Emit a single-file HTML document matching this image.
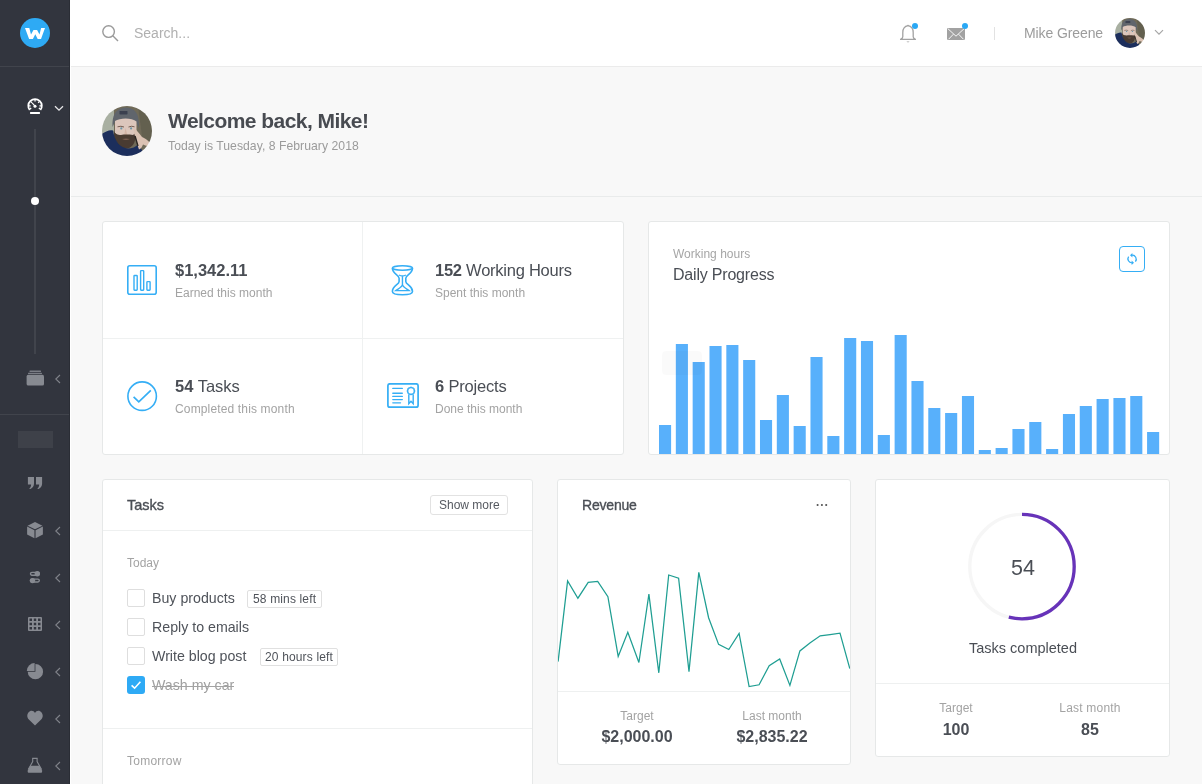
<!DOCTYPE html><html><head><meta charset="utf-8"><title>Dashboard</title><style>
*{margin:0;padding:0;box-sizing:border-box}
html,body{width:1202px;height:784px;overflow:hidden;background:#f8f8f8;font-family:"Liberation Sans",sans-serif}
.t{position:absolute;white-space:nowrap;will-change:transform}
.abs{position:absolute}
.card{position:absolute;background:#fff;border:1px solid #e6e8e8;border-radius:3px}
</style></head><body>
<div class="abs" style="left:0;top:0;width:70px;height:784px;background:#32353e;border-right:1px solid #2a2d35"></div>
<div class="abs" style="left:70px;top:0;width:1px;height:784px;background:#fff"></div>
<div class="abs" style="left:0;top:66px;width:69px;height:1px;background:#41444c"></div>
<div class="abs" style="left:0;top:414px;width:69px;height:1px;background:#41444c"></div>
<div class="abs" style="left:20px;top:18px;width:30px;height:30px;border-radius:50%;background:#2eaaf4"></div>
<svg class="abs" style="left:20px;top:18px" width="30" height="30" viewBox="0 0 30 30"><path d="M5 10.1 L9.3 10.1 L11 16.4 L13.5 11.9 L17.1 11.9 L19.5 16.4 L21.1 10.1 L25 10.1 L21 20.9 L17.7 20.9 L15.3 16.2 L12.9 20.9 L9.1 20.9 Z" fill="#fff"/></svg>
<svg class="abs" style="left:27px;top:98px" width="16" height="17" viewBox="0 0 16 17"><path d="M2.73 12.06 A6.75 6.75 0 1 1 13.37 12.06" fill="none" stroke="#fff" stroke-width="1.8"/><path d="M2.05 7.90 L3.65 7.90 M3.81 3.66 L4.94 4.79 M8.05 1.90 L8.05 3.50 M12.29 3.66 L11.16 4.79 M14.05 7.90 L12.45 7.90 M13.25 10.90 L11.86 10.10 M2.85 10.90 L4.24 10.10" stroke="#fff" stroke-width="1.3"/><line x1="5.1" y1="4.9" x2="8" y2="8.2" stroke="#fff" stroke-width="1.1"/><circle cx="8" cy="8.3" r="1.5" fill="#fff"/><rect x="3" y="14" width="10" height="1.9" rx="0.6" fill="#fff"/></svg>
<svg class="abs" style="left:54px;top:105px" width="10" height="7" viewBox="0 0 10 7"><path d="M1 1.2 L5 5.2 L9 1.2" fill="none" stroke="#e8e8ea" stroke-width="1.3"/></svg>
<div class="abs" style="left:34px;top:129px;width:2px;height:225px;background:#41444c"></div>
<div class="abs" style="left:31px;top:197px;width:8px;height:8px;border-radius:50%;background:#fff"></div>
<svg class="abs" style="left:26px;top:370px" width="18" height="16" viewBox="0 0 18 16"><rect x="3.5" y="0.4" width="11.5" height="1.5" rx="0.5" fill="#7b7e86"/><rect x="2" y="2.8" width="14" height="1.3" rx="0.5" fill="#7b7e86"/><rect x="0.6" y="4.8" width="17.4" height="10.8" rx="1.6" fill="#878a91"/></svg>
<svg class="abs" style="left:54px;top:374px" width="7" height="10" viewBox="0 0 7 10"><path d="M6 1 L1.8 5 L6 9" fill="none" stroke="#80838a" stroke-width="1.1"/></svg>
<div class="abs" style="left:18px;top:431px;width:35px;height:17px;background:#3e4149"></div>
<svg class="abs" style="left:27px;top:477px" width="16" height="12" viewBox="0 0 16 12"><path d="M0.9 0 H7 V6.6 C7 9.2 5.8 11 3.4 12 L2 12 C3.4 10.8 4 9.4 4.1 7.4 H0.9 Z M9 0 H15.1 V6.6 C15.1 9.2 13.9 11 11.5 12 L10.1 12 C11.5 10.8 12.1 9.4 12.2 7.4 H9 Z" fill="#878a91"/></svg>
<svg class="abs" style="left:26px;top:521px" width="18" height="18" viewBox="0 0 18 18"><g transform="translate(9 9.1) scale(0.95) translate(-9 -9.1)"><path d="M9 0.6 L16.8 4.4 L9 8.2 L1.2 4.4 Z" fill="#878a91"/><path d="M0.7 5.4 L8.4 9.2 V17.6 L0.7 13.8 Z" fill="#878a91"/><path d="M17.3 5.4 L9.6 9.2 V17.6 L17.3 13.8 Z" fill="#878a91"/></g></svg>
<svg class="abs" style="left:54px;top:526px" width="7" height="10" viewBox="0 0 7 10"><path d="M6 1 L1.8 5 L6 9" fill="none" stroke="#80838a" stroke-width="1.1"/></svg>
<svg class="abs" style="left:29px;top:570px" width="12" height="14" viewBox="0 0 12 14"><rect x="1.5" y="2.35" width="8.8" height="2.9" rx="1.45" fill="none" stroke="#878a91" stroke-width="1.4"/><circle cx="8.3" cy="3.7" r="2.7" fill="#878a91"/><rect x="1.5" y="9.15" width="8.8" height="2.9" rx="1.45" fill="none" stroke="#878a91" stroke-width="1.4"/><circle cx="3.5" cy="10.6" r="2.7" fill="#878a91"/></svg>
<svg class="abs" style="left:54px;top:573px" width="7" height="10" viewBox="0 0 7 10"><path d="M6 1 L1.8 5 L6 9" fill="none" stroke="#80838a" stroke-width="1.1"/></svg>
<svg class="abs" style="left:28px;top:617px" width="14" height="14" viewBox="0 0 14 14"><path fill="#878a91" fill-rule="evenodd" d="M0 1 Q0 0 1 0 H13 Q14 0 14 1 V13 Q14 14 13 14 H1 Q0 14 0 13 Z M1.5 1.5 H4 V4 H1.5 Z M5.8 1.5 H8.2 V4 H5.8 Z M10 1.5 H12.5 V4 H10 Z M1.5 5.8 H4 V8.2 H1.5 Z M5.8 5.8 H8.2 V8.2 H5.8 Z M10 5.8 H12.5 V8.2 H10 Z M1.5 10 H4 V12.5 H1.5 Z M5.8 10 H8.2 V12.5 H5.8 Z M10 10 H12.5 V12.5 H10 Z"/></svg>
<svg class="abs" style="left:54px;top:620px" width="7" height="10" viewBox="0 0 7 10"><path d="M6 1 L1.8 5 L6 9" fill="none" stroke="#80838a" stroke-width="1.1"/></svg>
<svg class="abs" style="left:26px;top:662px" width="18" height="18" viewBox="0 0 18 18"><path d="M9.4 9.7 V2.04 A7.66 7.66 0 1 1 1.74 9.7 Z" fill="#878a91"/><path d="M8.6 8.9 H0.8 A7.8 7.8 0 0 1 8.6 1.1 Z" fill="#878a91"/></svg>
<svg class="abs" style="left:54px;top:667px" width="7" height="10" viewBox="0 0 7 10"><path d="M6 1 L1.8 5 L6 9" fill="none" stroke="#80838a" stroke-width="1.1"/></svg>
<svg class="abs" style="left:27px;top:710px" width="16" height="16" viewBox="0 0 16 16"><path d="M8 15.5 L1.6 9.2 C-0.6 7 0 2.6 3 1.2 C5 0.3 7 1.2 8 3 C9 1.2 11 0.3 13 1.2 C16 2.6 16.6 7 14.4 9.2 Z" fill="#878a91"/></svg>
<svg class="abs" style="left:54px;top:714px" width="7" height="10" viewBox="0 0 7 10"><path d="M6 1 L1.8 5 L6 9" fill="none" stroke="#80838a" stroke-width="1.1"/></svg>
<svg class="abs" style="left:27px;top:757px" width="16" height="17" viewBox="0 0 16 17"><rect x="5" y="0.7" width="5.8" height="1.3" rx="0.4" fill="#878a91"/><path d="M5.7 2 V4.6 L1.2 12.6 M10.1 2 V4.6 L14.6 12.6" fill="none" stroke="#878a91" stroke-width="1.1"/><path d="M3.3 8.7 H12.5 L14.9 13.2 Q15.8 15.8 13.4 15.8 H2.4 Q0 15.8 0.9 13.2 Z" fill="#878a91"/></svg>
<svg class="abs" style="left:54px;top:761px" width="7" height="10" viewBox="0 0 7 10"><path d="M6 1 L1.8 5 L6 9" fill="none" stroke="#80838a" stroke-width="1.1"/></svg>
<div class="abs" style="left:71px;top:0;width:1131px;height:66px;background:#fff"></div>
<div class="abs" style="left:71px;top:66px;width:1131px;height:1px;background:#ebebeb"></div>
<svg class="abs" style="left:102px;top:25px" width="17" height="17" viewBox="0 0 17 17"><circle cx="6.6" cy="6.6" r="5.8" fill="none" stroke="#9a9a9a" stroke-width="1.4"/><line x1="10.8" y1="10.8" x2="16" y2="16" stroke="#9a9a9a" stroke-width="1.4"/></svg>
<div class="t" style="left:134px;top:18px;font-size:14px;line-height:30px;font-weight:400;color:#b0b0b0;">Search...</div>
<svg class="abs" style="left:899px;top:24px" width="18" height="20" viewBox="0 0 18 20"><path d="M9 1.6 C12.2 2.2 14.2 4.8 14.2 8.4 V12.8 C14.2 13.8 15 14.6 16.4 15.4 H1.6 C3 14.6 3.8 13.8 3.8 12.8 V8.4 C3.8 4.8 5.8 2.2 9 1.6 Z" fill="none" stroke="#a2a2a2" stroke-width="1.3" stroke-linejoin="round"/><path d="M8 1.8 L9 0.4 L10 1.8 Z" fill="#a2a2a2"/><path d="M7.4 17.4 H10.6 L9 18.6 Z" fill="#a2a2a2"/></svg>
<div class="abs" style="left:912px;top:23px;width:6.4px;height:6.4px;border-radius:50%;background:#2aa8f5"></div>
<svg class="abs" style="left:947px;top:28px" width="18" height="12" viewBox="0 0 18 12"><rect x="0" y="0" width="18" height="12" rx="1.2" fill="#a2a2a2"/><path d="M1 0.8 L9 8.2 L17 0.8 M1.6 11.2 L6.4 6.2 M16.4 11.2 L11.6 6.2" fill="none" stroke="#fff" stroke-width="0.9"/></svg>
<div class="abs" style="left:961.8px;top:23px;width:6.4px;height:6.4px;border-radius:50%;background:#2aa8f5"></div>
<div class="abs" style="left:994px;top:27px;width:1px;height:13px;background:#e2e2e2"></div>
<div class="t" style="left:1024px;top:18px;font-size:14px;line-height:30px;font-weight:400;color:#9c9c9c;letter-spacing:-0.1px;">Mike Greene</div>
<svg class="abs" style="left:1115px;top:18px" width="30" height="30" viewBox="0 0 50 50"><defs><clipPath id="c30"><circle cx="25" cy="25" r="25"/></clipPath><filter id="bl30" x="-10%" y="-10%" width="120%" height="120%"><feGaussianBlur stdDeviation="0.9"/></filter></defs><g clip-path="url(#c30)"><g filter="url(#bl30)"><rect x="-2" y="-2" width="54" height="54" fill="#6f6a58"/><rect x="-2" y="-2" width="14" height="54" fill="#a9b0a2"/><path d="M36 0 H52 V40 L40 30 Z" fill="#646050"/><path d="M10.5 21 C10 10 13 2 24 1.6 C34 2 37.5 9 37 22 L34 16 C30 12 18 12 13 16 Z" fill="#60656c"/><rect x="17.5" y="5" width="8" height="3.4" rx="0.6" fill="#3a4150"/><path d="M13 15 C18 11.5 30 11.5 34.5 15.5 L34.5 27 C33 31 28 32 24 32 C19 32 14 31 13 27 Z" fill="#dcc6bc"/><path d="M15.5 20.8 Q19 19.6 22 21 M26.5 21 Q29.5 19.6 32.5 20.8" stroke="#6a5448" stroke-width="0.9" fill="none"/><circle cx="19.3" cy="22.4" r="1.1" fill="#6f97a8"/><circle cx="29.1" cy="22.4" r="1.1" fill="#6f97a8"/><path d="M23.5 22 L22.2 29 L25.5 29.4 Z" fill="#d2b4a6"/><path d="M11.5 24 C12.5 28 16 29 19 29 C22 28.4 27 28.4 31 29 L33.5 27 C34 34 32 40 27 42 C22 43 15 41 12.5 35 Z" fill="#483a31"/><path d="M20 33 Q24 31.8 28 33 Q24 35 20 33 Z" fill="#7a5e52"/><path d="M-2 29 C4 25 8 23.5 11 24.5 C13 36 18 42 26 42.5 C30 42.5 34 41 36 38 L40 44 L44 52 H-2 Z" fill="#1c2f5c"/><path d="M31.5 22 C34 23 37 27 40 31 C44 33 47.5 35 48 38 C47 41 44 40 41 38.5 C40 41 39 43 37 43.5 C35.5 40 35 36 34 33 L32 27 Z" fill="#dbc2b3"/><path d="M33 30 C34 33 35 37 36 40" stroke="#2a2522" stroke-width="1.4" fill="none"/></g></g></svg>
<svg class="abs" style="left:1154px;top:29px" width="10" height="7" viewBox="0 0 10 7"><path d="M1 1.2 L5 5.2 L9 1.2" fill="none" stroke="#a6a6a6" stroke-width="1.2"/></svg>
<div class="abs" style="left:71px;top:196px;width:1131px;height:1px;background:#e9ebeb"></div>
<svg class="abs" style="left:102px;top:106px" width="50" height="50" viewBox="0 0 50 50"><defs><clipPath id="c50"><circle cx="25" cy="25" r="25"/></clipPath><filter id="bl50" x="-10%" y="-10%" width="120%" height="120%"><feGaussianBlur stdDeviation="0.7"/></filter></defs><g clip-path="url(#c50)"><g filter="url(#bl50)"><rect x="-2" y="-2" width="54" height="54" fill="#6f6a58"/><rect x="-2" y="-2" width="14" height="54" fill="#a9b0a2"/><path d="M36 0 H52 V40 L40 30 Z" fill="#646050"/><path d="M10.5 21 C10 10 13 2 24 1.6 C34 2 37.5 9 37 22 L34 16 C30 12 18 12 13 16 Z" fill="#60656c"/><rect x="17.5" y="5" width="8" height="3.4" rx="0.6" fill="#3a4150"/><path d="M13 15 C18 11.5 30 11.5 34.5 15.5 L34.5 27 C33 31 28 32 24 32 C19 32 14 31 13 27 Z" fill="#dcc6bc"/><path d="M15.5 20.8 Q19 19.6 22 21 M26.5 21 Q29.5 19.6 32.5 20.8" stroke="#6a5448" stroke-width="0.9" fill="none"/><circle cx="19.3" cy="22.4" r="1.1" fill="#6f97a8"/><circle cx="29.1" cy="22.4" r="1.1" fill="#6f97a8"/><path d="M23.5 22 L22.2 29 L25.5 29.4 Z" fill="#d2b4a6"/><path d="M11.5 24 C12.5 28 16 29 19 29 C22 28.4 27 28.4 31 29 L33.5 27 C34 34 32 40 27 42 C22 43 15 41 12.5 35 Z" fill="#483a31"/><path d="M20 33 Q24 31.8 28 33 Q24 35 20 33 Z" fill="#7a5e52"/><path d="M-2 29 C4 25 8 23.5 11 24.5 C13 36 18 42 26 42.5 C30 42.5 34 41 36 38 L40 44 L44 52 H-2 Z" fill="#1c2f5c"/><path d="M31.5 22 C34 23 37 27 40 31 C44 33 47.5 35 48 38 C47 41 44 40 41 38.5 C40 41 39 43 37 43.5 C35.5 40 35 36 34 33 L32 27 Z" fill="#dbc2b3"/><path d="M33 30 C34 33 35 37 36 40" stroke="#2a2522" stroke-width="1.4" fill="none"/></g></g></svg>
<div class="t" style="left:168px;top:106px;font-size:21px;line-height:30px;font-weight:700;color:#484b51;letter-spacing:-0.55px;">Welcome back, Mike!</div>
<div class="t" style="left:168px;top:131px;font-size:12.2px;line-height:30px;font-weight:400;color:#9b9b9b;letter-spacing:0.04px;">Today is Tuesday, 8 February 2018</div>
<div class="card" style="left:102px;top:221px;width:522px;height:234px"></div>
<div class="abs" style="left:362px;top:222px;width:1px;height:232px;background:#eff1f1"></div>
<div class="abs" style="left:103px;top:338px;width:520px;height:1px;background:#eff1f1"></div>
<svg class="abs" style="left:127px;top:265px" width="30" height="30" viewBox="0 0 30 30"><rect x="0.8" y="0.8" width="28.4" height="28.4" rx="2" fill="none" stroke="#35aef5" stroke-width="1.6"/><rect x="7" y="10.5" width="3.2" height="14.7" rx="0.6" fill="none" stroke="#35aef5" stroke-width="1.4"/><rect x="13.6" y="5.6" width="3.1" height="19.6" rx="0.6" fill="none" stroke="#35aef5" stroke-width="1.4"/><rect x="19.9" y="16.6" width="3.2" height="8.6" rx="0.6" fill="none" stroke="#35aef5" stroke-width="1.4"/></svg>
<div class="t" style="left:175px;top:255px;font-size:16.5px;line-height:30px;font-weight:700;color:#4a4e55;">$1,342.11</div>
<div class="t" style="left:175px;top:278px;font-size:12px;line-height:30px;font-weight:400;color:#a3a3a3;">Earned this month</div>
<svg class="abs" style="left:391px;top:265px" width="23" height="31" viewBox="0 0 23 31"><path d="M1.4 3 C1.4 9.2 8.1 9.6 8.1 13.2 V16.4 C8.1 19.8 1.4 20.6 1.4 26.5 C1.4 28.8 6 29.8 11.45 29.8 C16.9 29.8 21.5 28.8 21.5 26.5 C21.5 20.6 14.8 19.8 14.8 16.4 V13.2 C14.8 9.6 21.5 9.2 21.5 3" fill="none" stroke="#35aef5" stroke-width="1.6"/><ellipse cx="11.45" cy="3" rx="10.05" ry="2.2" fill="none" stroke="#35aef5" stroke-width="1.5"/><path d="M8 10 Q11.45 12 14.9 10 M11.45 10.9 V19.5 C11.45 22 6.5 24.2 4.8 25.6 H18.1 C16.4 24.2 11.45 22 11.45 19.5" fill="none" stroke="#35aef5" stroke-width="1.4"/></svg>
<div class="t" style="left:435px;top:255px;font-size:16.5px;line-height:30px;font-weight:400;color:#4a4e55;letter-spacing:-0.25px;"><b>152</b> Working Hours</div>
<div class="t" style="left:435px;top:278px;font-size:12px;line-height:30px;font-weight:400;color:#a3a3a3;">Spent this month</div>
<svg class="abs" style="left:126px;top:380px" width="32" height="32" viewBox="0 0 32 32"><circle cx="16.15" cy="16.15" r="14.25" fill="none" stroke="#35aef5" stroke-width="1.6"/><path d="M7.6 16.8 L12.8 21.8 L24.8 10.3" fill="none" stroke="#35aef5" stroke-width="1.7"/></svg>
<div class="t" style="left:175px;top:371px;font-size:16.5px;line-height:30px;font-weight:400;color:#4a4e55;"><b>54</b> Tasks</div>
<div class="t" style="left:175px;top:394px;font-size:12px;line-height:30px;font-weight:400;color:#a3a3a3;letter-spacing:0.15px;">Completed this month</div>
<svg class="abs" style="left:387px;top:383px" width="32" height="26" viewBox="0 0 32 26"><rect x="0.9" y="0.8" width="30.2" height="23.4" rx="2" fill="none" stroke="#35aef5" stroke-width="1.7"/><path d="M5.8 5.4 H15.3 M5.8 10.2 H15.3 M5.8 13.4 H15.3 M5.8 16.6 H15.3 M5.8 19.8 H13.5" stroke="#35aef5" stroke-width="1.35" stroke-linecap="round"/><path d="M24.00 3.30 L25.01 4.13 L26.30 3.92 L26.76 5.14 L27.98 5.60 L27.77 6.89 L28.60 7.90 L27.77 8.91 L27.98 10.20 L26.76 10.66 L26.30 11.88 L25.01 11.67 L24.00 12.50 L22.99 11.67 L21.70 11.88 L21.24 10.66 L20.02 10.20 L20.23 8.91 L19.40 7.90 L20.23 6.89 L20.02 5.60 L21.24 5.14 L21.70 3.92 L22.99 4.13 Z" fill="#35aef5"/><circle cx="24" cy="7.9" r="2.6" fill="#fff"/><path d="M21.8 11.6 V20.6 L24 18.2 L26.2 20.6 V11.6" fill="none" stroke="#35aef5" stroke-width="1.4"/></svg>
<div class="t" style="left:435px;top:371px;font-size:16.5px;line-height:30px;font-weight:400;color:#4a4e55;letter-spacing:-0.18px;"><b>6</b> Projects</div>
<div class="t" style="left:435px;top:394px;font-size:12px;line-height:30px;font-weight:400;color:#a3a3a3;">Done this month</div>
<div class="card" style="left:648px;top:221px;width:522px;height:234px;overflow:hidden"></div>
<div class="t" style="left:673px;top:239px;font-size:12px;line-height:30px;font-weight:400;color:#a6a6a6;">Working hours</div>
<div class="t" style="left:673px;top:260px;font-size:16px;line-height:30px;font-weight:400;color:#4a4e55;letter-spacing:-0.2px;">Daily Progress</div>
<div class="abs" style="left:1119px;top:246px;width:26px;height:26px;border:1px solid #35aef5;border-radius:4px"></div>
<svg class="abs" style="left:1126px;top:252px" width="12" height="14" viewBox="0 0 12 14"><path d="M9.4 9.6 A4 4 0 0 0 6 3.2" fill="none" stroke="#35aef5" stroke-width="1.3"/><path d="M2.6 4.6 A4 4 0 0 0 6 10.8" fill="none" stroke="#35aef5" stroke-width="1.3"/><path d="M6.4 1 L6.4 5.4 L4 3.2 Z" fill="#35aef5"/><path d="M5.6 8.6 L5.6 13 L8 10.8 Z" fill="#35aef5"/></svg>
<svg class="abs" style="left:0;top:0" width="1202" height="784" viewBox="0 0 1202 784"><rect x="659.00" y="425" width="12.1" height="29" fill="#58b0fb"/><rect x="675.83" y="344" width="12.1" height="110" fill="#58b0fb"/><rect x="692.66" y="362" width="12.1" height="92" fill="#58b0fb"/><rect x="709.49" y="346" width="12.1" height="108" fill="#58b0fb"/><rect x="726.32" y="345" width="12.1" height="109" fill="#58b0fb"/><rect x="743.15" y="360" width="12.1" height="94" fill="#58b0fb"/><rect x="759.98" y="420" width="12.1" height="34" fill="#58b0fb"/><rect x="776.81" y="395" width="12.1" height="59" fill="#58b0fb"/><rect x="793.64" y="426" width="12.1" height="28" fill="#58b0fb"/><rect x="810.47" y="357" width="12.1" height="97" fill="#58b0fb"/><rect x="827.30" y="436" width="12.1" height="18" fill="#58b0fb"/><rect x="844.13" y="338" width="12.1" height="116" fill="#58b0fb"/><rect x="860.96" y="341" width="12.1" height="113" fill="#58b0fb"/><rect x="877.79" y="435" width="12.1" height="19" fill="#58b0fb"/><rect x="894.62" y="335" width="12.1" height="119" fill="#58b0fb"/><rect x="911.45" y="381" width="12.1" height="73" fill="#58b0fb"/><rect x="928.28" y="408" width="12.1" height="46" fill="#58b0fb"/><rect x="945.11" y="413" width="12.1" height="41" fill="#58b0fb"/><rect x="961.94" y="396" width="12.1" height="58" fill="#58b0fb"/><rect x="978.77" y="450" width="12.1" height="4" fill="#58b0fb"/><rect x="995.60" y="448" width="12.1" height="6" fill="#58b0fb"/><rect x="1012.43" y="429" width="12.1" height="25" fill="#58b0fb"/><rect x="1029.26" y="422" width="12.1" height="32" fill="#58b0fb"/><rect x="1046.09" y="449" width="12.1" height="5" fill="#58b0fb"/><rect x="1062.92" y="414" width="12.1" height="40" fill="#58b0fb"/><rect x="1079.75" y="406" width="12.1" height="48" fill="#58b0fb"/><rect x="1096.58" y="399" width="12.1" height="55" fill="#58b0fb"/><rect x="1113.41" y="398" width="12.1" height="56" fill="#58b0fb"/><rect x="1130.24" y="396" width="12.1" height="58" fill="#58b0fb"/><rect x="1147.07" y="432" width="12.1" height="22" fill="#58b0fb"/></svg>
<div class="abs" style="left:662px;top:351px;width:40px;height:24px;border-radius:4px;background:rgba(0,0,0,0.018)"></div>
<div class="card" style="left:102px;top:479px;width:431px;height:320px"></div>
<div class="abs" style="left:103px;top:530px;width:429px;height:1px;background:#eef0f0"></div>
<div class="abs" style="left:103px;top:728px;width:429px;height:1px;background:#eef0f0"></div>
<div class="t" style="left:127px;top:490px;font-size:14.5px;line-height:30px;font-weight:400;color:#4a4e55;-webkit-text-stroke:0.35px #4a4e55;">Tasks</div>
<div class="abs" style="left:430px;top:495px;width:78px;height:20px;border:1px solid #e2e2e2;border-radius:3px"></div>
<div class="t" style="left:439px;top:490px;font-size:12px;line-height:30px;font-weight:400;color:#555960;">Show more</div>
<div class="t" style="left:127px;top:548px;font-size:12px;line-height:30px;font-weight:400;color:#a3a3a3;">Today</div>
<div class="abs" style="left:127px;top:589px;width:18px;height:18px;border:1px solid #dedede;border-radius:2px;background:#fff"></div>
<div class="t" style="left:152px;top:583px;font-size:14.2px;line-height:30px;font-weight:400;color:#4f535a;">Buy products</div>
<div class="abs" style="left:247px;top:590px;width:75px;height:18px;border:1px solid #e0e0e0;border-radius:2px"></div>
<div class="t" style="left:252.5px;top:584px;font-size:12px;line-height:30px;font-weight:400;color:#4f535a;letter-spacing:0.15px;">58 mins left</div>
<div class="abs" style="left:127px;top:618px;width:18px;height:18px;border:1px solid #dedede;border-radius:2px;background:#fff"></div>
<div class="t" style="left:152px;top:612px;font-size:14.2px;line-height:30px;font-weight:400;color:#4f535a;">Reply to emails</div>
<div class="abs" style="left:127px;top:647px;width:18px;height:18px;border:1px solid #dedede;border-radius:2px;background:#fff"></div>
<div class="t" style="left:152px;top:641px;font-size:14.2px;line-height:30px;font-weight:400;color:#4f535a;">Write blog post</div>
<div class="abs" style="left:260px;top:648px;width:78px;height:18px;border:1px solid #e0e0e0;border-radius:2px"></div>
<div class="t" style="left:264.5px;top:642px;font-size:12px;line-height:30px;font-weight:400;color:#4f535a;letter-spacing:0.15px;">20 hours left</div>
<div class="abs" style="left:127px;top:676px;width:18px;height:18px;border-radius:3px;background:#2eaaf5"></div>
<svg class="abs" style="left:127px;top:676px" width="18" height="18" viewBox="0 0 18 18"><path d="M4.6 9.4 L7.6 12.2 L13.4 5.8" fill="none" stroke="#fff" stroke-width="1.6"/></svg>
<div class="t" style="left:152px;top:670px;font-size:14.2px;line-height:30px;font-weight:400;color:#a0a0a0;">Wash my car</div>
<div class="abs" style="left:152px;top:686px;width:82px;height:1px;background:#a3a3a3"></div>
<div class="t" style="left:127px;top:746px;font-size:12px;line-height:30px;font-weight:400;color:#a3a3a3;letter-spacing:0.25px;">Tomorrow</div>
<div class="card" style="left:557px;top:479px;width:294px;height:286px;overflow:hidden"></div>
<div class="t" style="left:582px;top:490px;font-size:14px;line-height:30px;font-weight:400;color:#4a4e55;letter-spacing:-0.2px;-webkit-text-stroke:0.35px #4a4e55;">Revenue</div>
<svg class="abs" style="left:816px;top:503px" width="12" height="4" viewBox="0 0 12 4"><circle cx="1.6" cy="2" r="1.05" fill="#505050"/><circle cx="5.9" cy="2" r="1.05" fill="#505050"/><circle cx="10.2" cy="2" r="1.05" fill="#505050"/></svg>
<svg class="abs" style="left:0;top:0" width="1202" height="784" viewBox="0 0 1202 784"><defs><clipPath id="rv"><rect x="558" y="480" width="292" height="211"/></clipPath></defs><path clip-path="url(#rv)" d="M558.1 661.6 L567.6 581.0 L577.9 598.2 L588.2 582.4 L597.7 581.5 L607.9 596.7 L618.2 656.4 L627.8 632.3 L638.9 662.5 L648.9 594.1 L658.8 672.8 L668.7 575.0 L678.6 578.1 L689.0 671.6 L698.8 572.4 L708.6 617.7 L718.6 644.4 L728.8 649.5 L739.1 633.5 L749.1 686.6 L759.1 684.8 L769.2 665.6 L779.7 659.0 L789.9 685.4 L799.9 650.9 L809.9 643.0 L820.2 635.8 L830.0 634.6 L840.0 633.2 L849.8 668.5" fill="none" stroke="#1f9e92" stroke-width="1.25" stroke-linejoin="miter"/></svg>
<div class="abs" style="left:558px;top:691px;width:292px;height:1px;background:#eef0f0"></div>
<div class="t" style="left:487px;width:300px;text-align:center;top:701px;font-size:12px;line-height:30px;font-weight:400;color:#a3a3a3;">Target</div>
<div class="t" style="left:487px;width:300px;text-align:center;top:722px;font-size:16px;line-height:30px;font-weight:700;color:#4a4e55;">$2,000.00</div>
<div class="t" style="left:621.5px;width:300px;text-align:center;top:701px;font-size:12px;line-height:30px;font-weight:400;color:#a3a3a3;">Last month</div>
<div class="t" style="left:621.5px;width:300px;text-align:center;top:722px;font-size:16px;line-height:30px;font-weight:700;color:#4a4e55;">$2,835.22</div>
<div class="card" style="left:875px;top:479px;width:295px;height:278px"></div>
<svg class="abs" style="left:967px;top:511px" width="110" height="110" viewBox="0 0 110 110"><circle cx="55" cy="55.6" r="52.2" fill="none" stroke="#f6f6f6" stroke-width="3.4"/><circle cx="55" cy="55.6" r="52.2" fill="none" stroke="#6733b9" stroke-width="3.3" stroke-dasharray="177.1 400" transform="rotate(-90 55 55.6)"/></svg>
<div class="t" style="left:873px;width:300px;text-align:center;top:553px;font-size:21.5px;line-height:30px;font-weight:400;color:#4a4e55;">54</div>
<div class="t" style="left:872.7px;width:300px;text-align:center;top:633px;font-size:14.5px;line-height:30px;font-weight:400;color:#4a4e55;">Tasks completed</div>
<div class="abs" style="left:876px;top:683px;width:293px;height:1px;background:#eef0f0"></div>
<div class="t" style="left:805.7px;width:300px;text-align:center;top:693px;font-size:12px;line-height:30px;font-weight:400;color:#a3a3a3;">Target</div>
<div class="t" style="left:805.7px;width:300px;text-align:center;top:715px;font-size:16px;line-height:30px;font-weight:700;color:#4a4e55;">100</div>
<div class="t" style="left:939.8px;width:300px;text-align:center;top:693px;font-size:12px;line-height:30px;font-weight:400;color:#a3a3a3;letter-spacing:0.2px;">Last month</div>
<div class="t" style="left:939.8px;width:300px;text-align:center;top:715px;font-size:16px;line-height:30px;font-weight:700;color:#4a4e55;">85</div>
</body></html>
